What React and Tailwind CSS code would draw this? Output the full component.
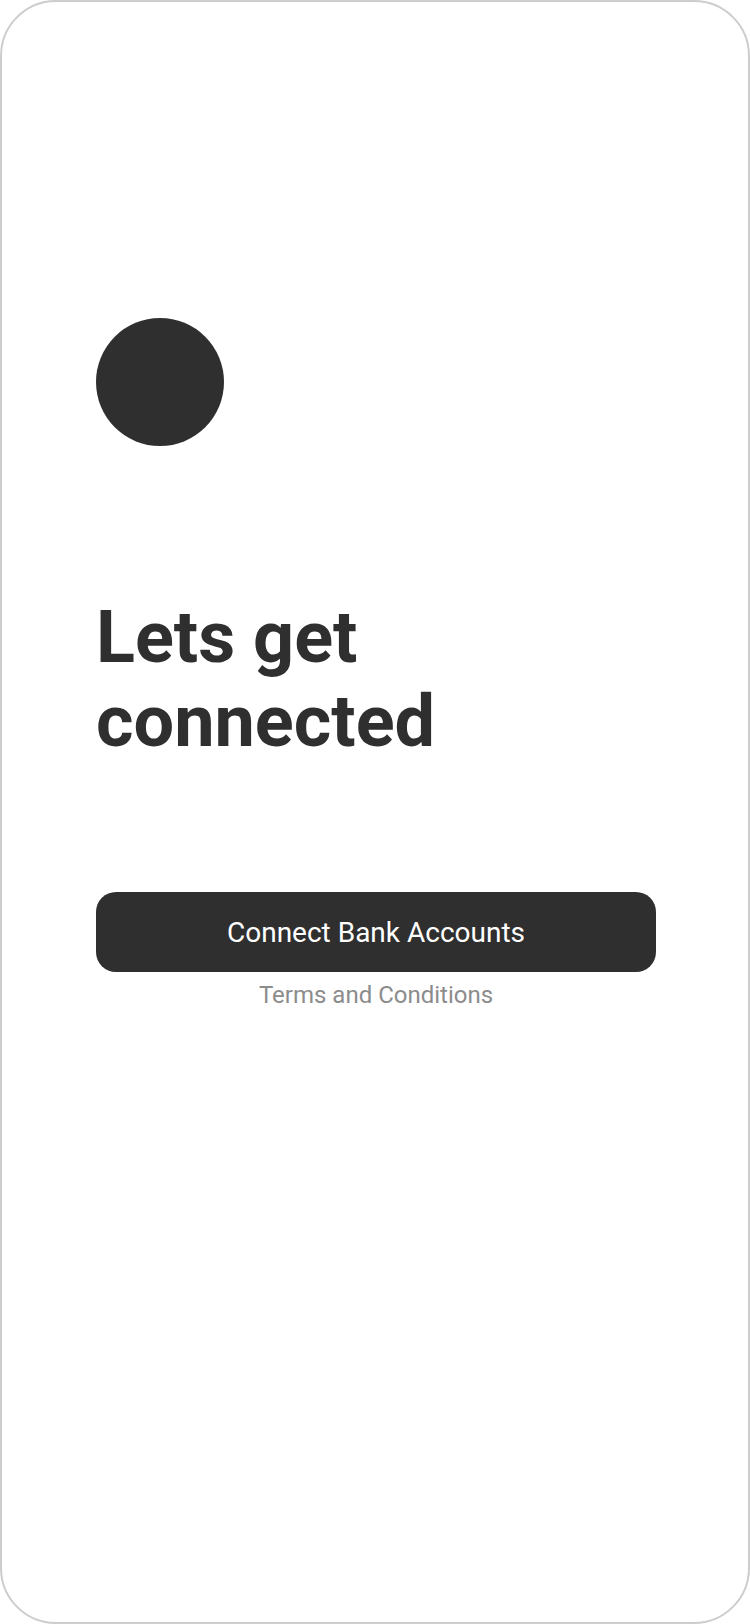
export default function App() {
  return (
    <div className="w-[750px] h-[1624px] bg-white" style={{ fontFamily: "Roboto, 'Noto Sans', sans-serif" }}>
      <div className="w-full h-full rounded-[56px] border-2 border-[#cdcdcd] bg-white flex flex-col pt-[316px] pl-[94px] pr-[92px]">
        <div className="w-[128px] h-[128px] rounded-full bg-[#2f2f2f]" />
        <h1 className="mt-[150px] text-[72px] leading-[84px] font-bold text-[#2f2f2f]">
          Lets get
          <br />
          connected
        </h1>
        <button className="mt-[128px] h-[80px] w-full rounded-[20px] bg-[#2f2f2f] text-white text-[28px] font-normal flex items-center justify-center pt-[2px]">
          Connect Bank Accounts
        </button>
        <div className="mt-[9px] text-center text-[24px] leading-[28px] text-[#8c8c8c]">
          Terms and Conditions
        </div>
      </div>
    </div>
  );
}
